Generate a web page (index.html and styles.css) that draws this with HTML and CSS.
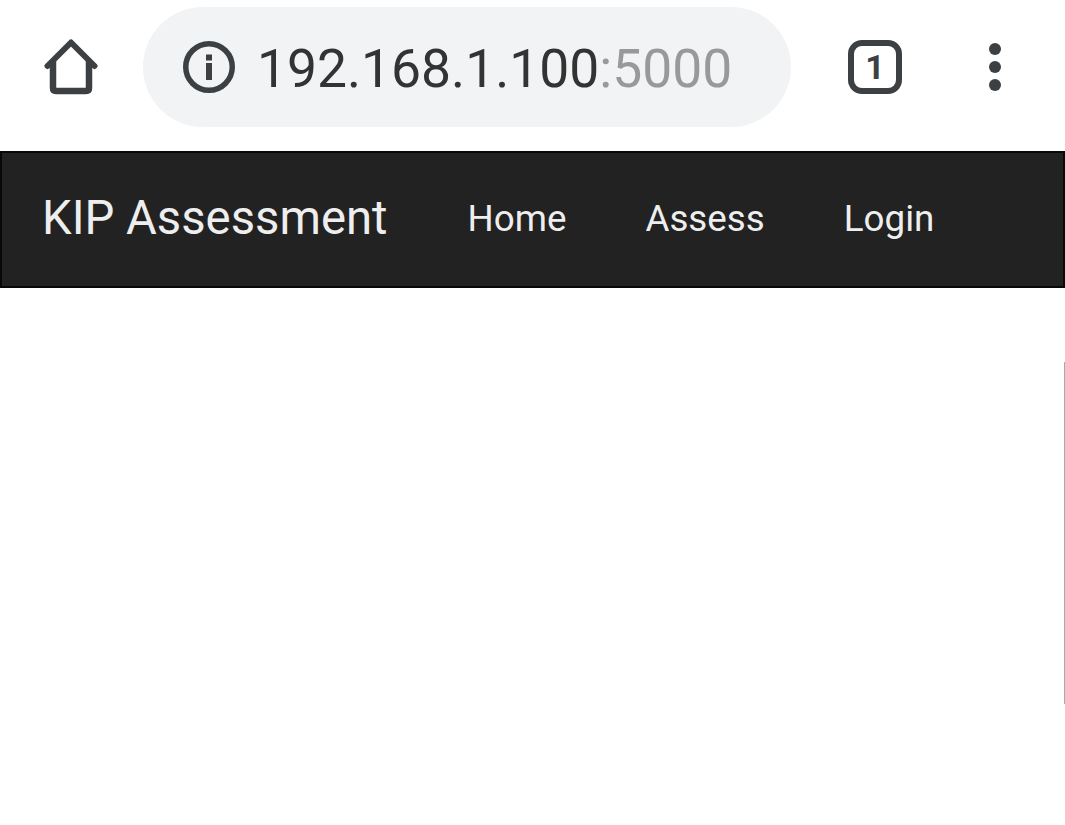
FILE: index.html
```html
<!DOCTYPE html>
<html lang="en">
<head>
<meta charset="utf-8">
<title>KIP Assessment</title>
<link rel="stylesheet" href="styles.css">
</head>
<body>
<header class="toolbar">
  <svg class="icon-home" width="56" height="56" viewBox="0 0 56 56" aria-hidden="true">
    <path d="M3.5 27 L27 3.5 L50.5 27" fill="none" stroke="#3c4043" stroke-width="6" stroke-linecap="round" stroke-linejoin="round"/>
    <path d="M9 22 V49 Q9 52 12 52 H42 Q45 52 45 49 V22" fill="none" stroke="#3c4043" stroke-width="6.5" stroke-linecap="butt" stroke-linejoin="round"/>
  </svg>
  <div class="omnibox">
    <svg class="icon-info" width="52" height="52" viewBox="0 0 52 52" aria-hidden="true">
      <circle cx="26" cy="26" r="23.25" fill="none" stroke="#3c4043" stroke-width="5.5"/>
      <rect x="23" y="13.5" width="6" height="6" fill="#3c4043"/>
      <rect x="23" y="22" width="6" height="17" fill="#3c4043"/>
    </svg>
    <span class="url">192.168.1.100<span class="port">:5000</span></span>
  </div>
  <div class="tabs"><span class="tabs-count">1</span></div>
  <div class="menu"><i class="dot"></i><i class="dot"></i><i class="dot"></i></div>
</header>
<nav class="navbar">
  <a class="brand">KIP Assessment</a>
  <ul class="nav-links">
    <li><a>Home</a></li>
    <li><a>Assess</a></li>
    <li><a>Login</a></li>
  </ul>
</nav>
<div class="scrollbar"></div>
</body>
</html>
```
FILE: styles.css
```css
html, body {
  margin: 0;
  padding: 0;
  height: 100%;
  background: #fff;
  overflow: hidden;
}
body {
  position: relative;
  font-family: Roboto, "Liberation Sans", sans-serif;
}
.toolbar {
  height: 151px;
  box-sizing: border-box;
  display: flex;
  align-items: flex-start;
}
.icon-home {
  flex: none;
  margin: 39px 0 0 44px;
}
.omnibox {
  flex: none;
  box-sizing: border-box;
  width: 648px;
  height: 120px;
  margin: 7px 0 0 43px;
  padding-left: 40px;
  border-radius: 60px;
  background: #f1f3f4;
  display: flex;
  align-items: center;
}
.icon-info {
  flex: none;
}
.url {
  margin: 4px 0 0 22px;
  font-size: 53.4px;
  line-height: 120px;
  color: #333;
  white-space: nowrap;
}
.port {
  color: #999;
}
.tabs {
  flex: none;
  box-sizing: border-box;
  width: 54px;
  height: 54px;
  margin: 40px 0 0 57px;
  border: 6px solid #3c4043;
  border-radius: 14px;
  display: flex;
  align-items: center;
  justify-content: center;
}
.tabs-count {
  font-size: 34px;
  font-weight: 700;
  line-height: 1;
  color: #3c4043;
}
.menu {
  flex: none;
  margin: 43px 0 0 87px;
  display: flex;
  flex-direction: column;
  gap: 6px;
}
.dot {
  display: block;
  width: 12px;
  height: 12px;
  border-radius: 50%;
  background: #3c4043;
}
.navbar {
  box-sizing: border-box;
  height: 137px;
  background: #222;
  border: 2px solid #080808;
  display: flex;
  align-items: center;
  padding-left: 40px;
}
.brand {
  font-size: 47.25px;
  line-height: 1;
  margin-top: -2px;
  color: #eee;
  white-space: nowrap;
}
.nav-links {
  list-style: none;
  display: flex;
  gap: 79px;
  margin: -2px 0 0 80px;
  padding: 0;
}
.nav-links a {
  font-size: 36.75px;
  color: #eee;
  white-space: nowrap;
}
.scrollbar {
  position: absolute;
  right: 0;
  top: 362px;
  width: 1px;
  height: 342px;
  background: #a8a8a8;
}
```
